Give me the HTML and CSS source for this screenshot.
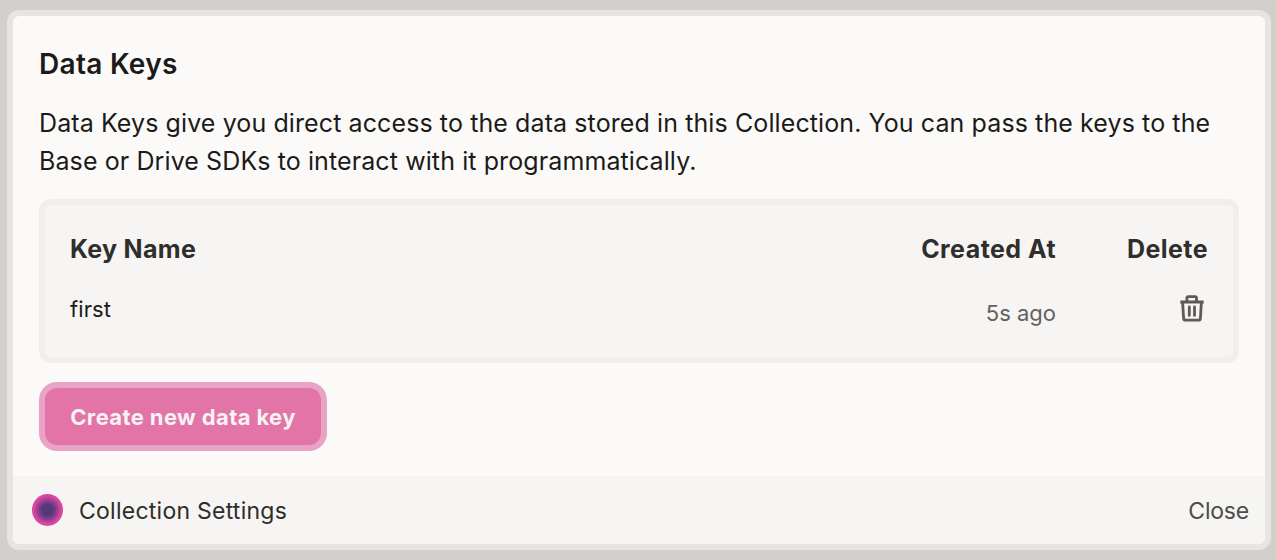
FILE: index.html
```
<!DOCTYPE html>
<html lang="en">
<head>
<meta charset="utf-8">
<title>Data Keys</title>
<link rel="stylesheet" href="styles.css">
</head>
<body>
<main class="modal">
  <section class="content">
    <h1 class="title">Data Keys</h1>
    <p class="description"><span class="line line-one">Data Keys give you direct access to the data stored in this Collection. You can pass the keys to the</span> <span class="line line-two">Base or Drive SDKs to interact with it programmatically.</span></p>
    <div class="keys">
      <div class="row head">
        <span class="name">Key Name</span><span class="created">Created At</span><span class="delete">Delete</span>
      </div>
      <div class="row item">
        <span class="name">first</span><span class="created">5s ago</span>
        <button class="trash" aria-label="Delete key">
          <svg width="28" height="30" viewBox="0 0 28 30" fill="none" stroke="currentColor" stroke-width="2.8" stroke-linejoin="round"><path d="M2.3 8H25.7M8.9 8V4Q8.9 2.6 10.3 2.6H17.1Q18.5 2.6 18.5 4V8M4.6 8L5.6 24.5Q5.8 26.2 7.5 26.2H20.5Q22.2 26.2 22.4 24.5L23.4 8"/><path stroke-linecap="round" d="M11.3 13V21.4M16.5 13V21.4"/></svg>
        </button>
      </div>
    </div>
    <button class="create"><span>Create new data key</span></button>
  </section>
  <footer class="footer">
    <svg class="logo" width="31" height="32" viewBox="0 0 31 32"><ellipse cx="15.5" cy="16" rx="15.5" ry="15.9" fill="#dc46a0"/><circle cx="15.5" cy="16" r="12.9" fill="#b8439a"/><circle cx="15.5" cy="16" r="10.8" fill="#91408f"/><circle cx="15.5" cy="16" r="8.7" fill="#743b86"/><circle cx="15.5" cy="16" r="6.4" fill="#53397a"/></svg>
    <span class="settings">Collection Settings</span>
    <button class="close">Close</button>
  </footer>
</main>
</body>
</html>
```
FILE: styles.css
```
* { box-sizing: border-box; }
body { margin: 0; height: 560px; padding: 10px 5px 10px 7px; overflow: hidden; background: #d1d0cd; color: #1b1b1a; font-family: Inter, sans-serif; }
button { border: 0; padding: 0; background: none; font: inherit; }
.modal { height: 540px; border: 6px solid #e7e4e1; border-radius: 12px; background: #fbfaf8; display: flex; flex-direction: column; overflow: hidden; }
.content { height: 460px; padding: 28px 26px 0; }
.title { margin: 0; height: 40px; line-height: 40px; font-size: 28px; font-weight: 600; letter-spacing: .3px; white-space: nowrap; }
.description { margin: 20px 0 0; font-size: 25px; line-height: 38px; letter-spacing: .1px; white-space: nowrap; }
.line { display: block; width: max-content; }
.keys { margin-top: 19px; height: 164px; border: 6px solid #f0efec; border-radius: 12px; background: #f6f5f3; padding: 25px 25px 0; }
.row { display: grid; grid-template-columns: 1fr 180px 152px; white-space: nowrap; }
.head { height: 38px; line-height: 38px; font-size: 25px; font-weight: 700; letter-spacing: .45px; color: #2f2e2c; }
.head .name { letter-spacing: .3px; }
.created, .delete { text-align: right; }
.item { margin-top: 22px; height: 38px; line-height: 38px; font-size: 22px; letter-spacing: .1px; }
.item .created { padding-top: 4px; color: #62625d; letter-spacing: 0; }
.trash { justify-self: end; width: 28px; height: 30px; margin: 4px 2px 0 0; color: #5c5b59; }
.trash svg { display: block; }
.create { display: block; margin-top: 19px; width: 288px; height: 69px; border: 6px solid #e9a3c4; border-radius: 18px; background: #e274a8; color: #f8f2f3; font-size: 22px; font-weight: 700; letter-spacing: .38px; white-space: nowrap; }
.footer { flex: 1; display: flex; align-items: center; padding: 0 16px 0 19px; background: #f6f5f3; font-size: 23px; letter-spacing: .25px; color: #2d2d2a; }
.settings { margin: 2px 0 0 16px; }
.close { margin: 2px 0 0 auto; color: #4d4d49; letter-spacing: -.2px; }
```
